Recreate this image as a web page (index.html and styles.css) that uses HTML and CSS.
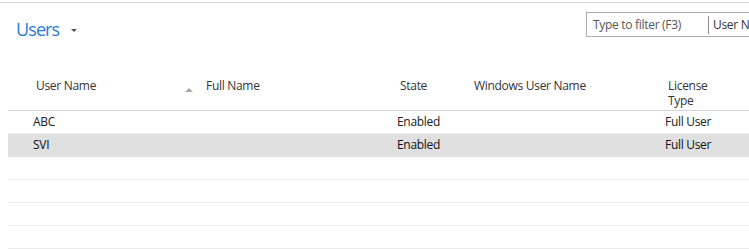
FILE: index.html
```html
<!DOCTYPE html>
<html>
<head>
  <title>Users</title>
<link rel="stylesheet" href="styles.css">
</head>
<body>
  <div class="page">
    <div class="topline"></div>

    <div class="titlebar">
      <h1 class="title">Users <span class="caret"></span></h1>
      <div class="filter">
        <span class="filter-text">Type to filter (F3)</span>
        <span class="filter-sep"></span>
        <span class="filter-field">User Name</span>
      </div>
    </div>

    <div class="grid-wrap">
      <table class="grid">
        <colgroup>
          <col class="c-mark">
          <col class="c-user">
          <col class="c-full">
          <col class="c-state">
          <col class="c-win">
          <col class="c-lic">
        </colgroup>
        <thead>
          <tr>
            <th></th>
            <th class="sorted">User Name <span class="sort-arrow"></span></th>
            <th>Full Name</th>
            <th>State</th>
            <th>Windows User Name</th>
            <th>License<br>Type</th>
          </tr>
        </thead>
        <tbody>
          <tr>
            <td></td>
            <td>ABC</td>
            <td></td>
            <td>Enabled</td>
            <td></td>
            <td>Full User</td>
          </tr>
          <tr class="selected">
            <td></td>
            <td>SVI</td>
            <td></td>
            <td>Enabled</td>
            <td></td>
            <td>Full User</td>
          </tr>
          <tr class="empty"><td></td><td></td><td></td><td></td><td></td><td></td></tr>
          <tr class="empty"><td></td><td></td><td></td><td></td><td></td><td></td></tr>
          <tr class="empty"><td></td><td></td><td></td><td></td><td></td><td></td></tr>
          <tr class="empty"><td></td><td></td><td></td><td></td><td></td><td></td></tr>
        </tbody>
      </table>
    </div>
  </div>
</body>
</html>
```

FILE: styles.css
```css
body {
  font-family: "Open Sans", Arial, sans-serif;
  background-color: #fff;
  margin: 0;
  padding: 0;
  color: #212121;
  overflow: hidden;
}

.page {
  width: 749px;
  height: 249px;
  overflow: hidden;
}

.topline {
  height: 2px;
  border-bottom: 1px solid #d6d6d6;
}

.titlebar {
  display: flex;
  align-items: flex-start;
  height: 67px;
}

.title {
  margin: 14px 0 0 16px;
  font-size: 18px;
  font-weight: 400;
  letter-spacing: -0.9px;
  color: #2a7dd1;
  line-height: 24px;
}

.caret {
  display: inline-block;
  width: 0;
  height: 0;
  margin-left: 8px;
  vertical-align: 4px;
  border-left: 3px solid transparent;
  border-right: 3px solid transparent;
  border-top: 3px solid #555;
}

.filter {
  margin: 9px 0 0 auto;
  width: 200px;
  flex-shrink: 0;
  height: 23px;
  border: 1px solid #ababab;
  border-right: none;
  display: flex;
  align-items: center;
  font-size: 12px;
  letter-spacing: -0.3px;
  color: #555;
  white-space: nowrap;
  margin-right: -38px;
}

.filter-text {
  padding-left: 6px;
  width: 115px;
}

.filter-sep {
  width: 1px;
  height: 18px;
  background-color: #8a8a8a;
}

.filter-field {
  padding-left: 4px;
  color: #333;
}

.grid-wrap {
  margin-left: 8px;
  width: 741px;
  overflow: hidden;
}

.grid {
  width: 780px;
  table-layout: fixed;
  border-collapse: collapse;
  font-size: 12px;
  letter-spacing: -0.3px;
}

.c-mark { width: 20px; }
.c-user { width: 170px; }
.c-full { width: 194px; }
.c-state { width: 74px; }
.c-win { width: 194px; }
.c-lic { width: 128px; }

th {
  text-align: left;
  font-weight: 400;
  color: #333;
  vertical-align: top;
  padding: 8px 0 2px 8px;
  line-height: 15px;
  border-bottom: 1px solid #d4d4d4;
  height: 30px;
}

th.sorted {
  position: relative;
}

.sort-arrow {
  position: absolute;
  right: 5px;
  top: 18px;
  width: 0;
  height: 0;
  border-left: 4px solid transparent;
  border-right: 4px solid transparent;
  border-bottom: 4px solid #a8a8a8;
}

td {
  height: 22px;
  padding: 0 0 0 5px;
  border-bottom: 1px solid #ebebeb;
  white-space: nowrap;
  line-height: 22px;
}

tr.selected td {
  background-color: #e0e0e0;
  font-weight: 500;
  color: #111;
  border-bottom-color: #e0e0e0;
}
```
